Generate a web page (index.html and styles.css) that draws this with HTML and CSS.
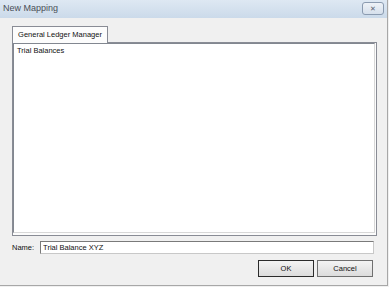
FILE: index.html
```html
<!DOCTYPE html>
<html lang="en">
<head>
  <meta charset="UTF-8" />
  <title>New Mapping</title>
  <link rel="stylesheet" href="styles.css">
</head>
<body>
  <div class="window">
    <div class="titlebar">
      <span class="title">New Mapping</span>
      <span class="close-btn">&#x2715;</span>
    </div>

    <div class="content">
      <div class="tabs">
        <div class="tab active">General Ledger Manager</div>
      </div>
      <div class="tab-panel">
        <div class="listbox">
          <div class="list-item">Trial Balances</div>
        </div>
      </div>

      <div class="name-row">
        <label for="name">Name:</label>
        <input type="text" id="name" value="Trial Balance XYZ" />
      </div>

      <div class="buttons">
        <button class="default">OK</button>
        <button>Cancel</button>
      </div>
    </div>
  </div>
</body>
</html>
```

FILE: styles.css
```css
* {
  box-sizing: border-box;
  font-family: 'Liberation Sans', Arial, sans-serif;
}

body {
  margin: 0;
  background: #f0f0f0;
  width: 389px;
  height: 287px;
  overflow: hidden;
}

.window {
  width: 388px;
  height: 286px;
  background: #f0f0f0;
  border-right: 1px solid #a7a7a7;
  border-bottom: 1px solid #a7a7a7;
}

.titlebar {
  height: 18px;
  background: linear-gradient(to bottom, #dee8f3, #cbdaea);
  display: flex;
  align-items: center;
  justify-content: space-between;
  padding: 0 3px 0 3px;
}

.title {
  font-size: 9px;
  color: #4a4f57;
  margin-top: -2px;
}

.close-btn {
  width: 22px;
  height: 13px;
  margin-top: -1px;
  border: 1px solid #8b9bb0;
  border-radius: 3px;
  background: linear-gradient(to bottom, #eef2f7, #d6e0ec);
  color: #5a6372;
  font-size: 7px;
  line-height: 11px;
  text-align: center;
}

.content {
  padding: 7px 11px 0 12px;
}

.tabs {
  display: flex;
  height: 17px;
}

.tab {
  width: 96px;
  height: 17px;
  border: 1px solid #898c95;
  border-bottom: none;
  background: #fcfcfc;
  font-size: 7.5px;
  color: #111;
  text-align: center;
  line-height: 16px;
  position: relative;
  top: 1px;
}

.tab-panel {
  width: 365px;
  height: 194px;
  border: 1px solid #898c95;
  background: #fcfcfc;
  padding: 0 1px 2px 0;
}

.listbox {
  height: 100%;
  background: #fff;
  border: 1px solid #828790;
  border-right-color: #d8d8d8;
  border-bottom-color: #d8d8d8;
  padding: 2px 3px;
}

.list-item {
  font-size: 7.5px;
  color: #111;
}

.name-row {
  display: flex;
  align-items: center;
  margin-top: 5px;
  gap: 6px;
}

.name-row label {
  font-size: 7.5px;
  color: #111;
}

.name-row input {
  width: 334px;
  height: 13px;
  border: 1px solid #7a7a7a;
  border-right-color: #c8c8c8;
  border-bottom-color: #c8c8c8;
  background: #fff;
  font-size: 7.5px;
  padding: 0 2px;
  color: #111;
}

.buttons {
  display: flex;
  justify-content: flex-end;
  gap: 3px;
  margin-top: 6px;
  padding-right: 3px;
}

button {
  width: 56px;
  height: 17px;
  border: 1px solid #707070;
  background: linear-gradient(to bottom, #f4f4f4, #dcdcdc);
  font-size: 7.5px;
  color: #111;
  padding: 0;
}

button.default {
  border-color: #2b2b2b;
}
```
